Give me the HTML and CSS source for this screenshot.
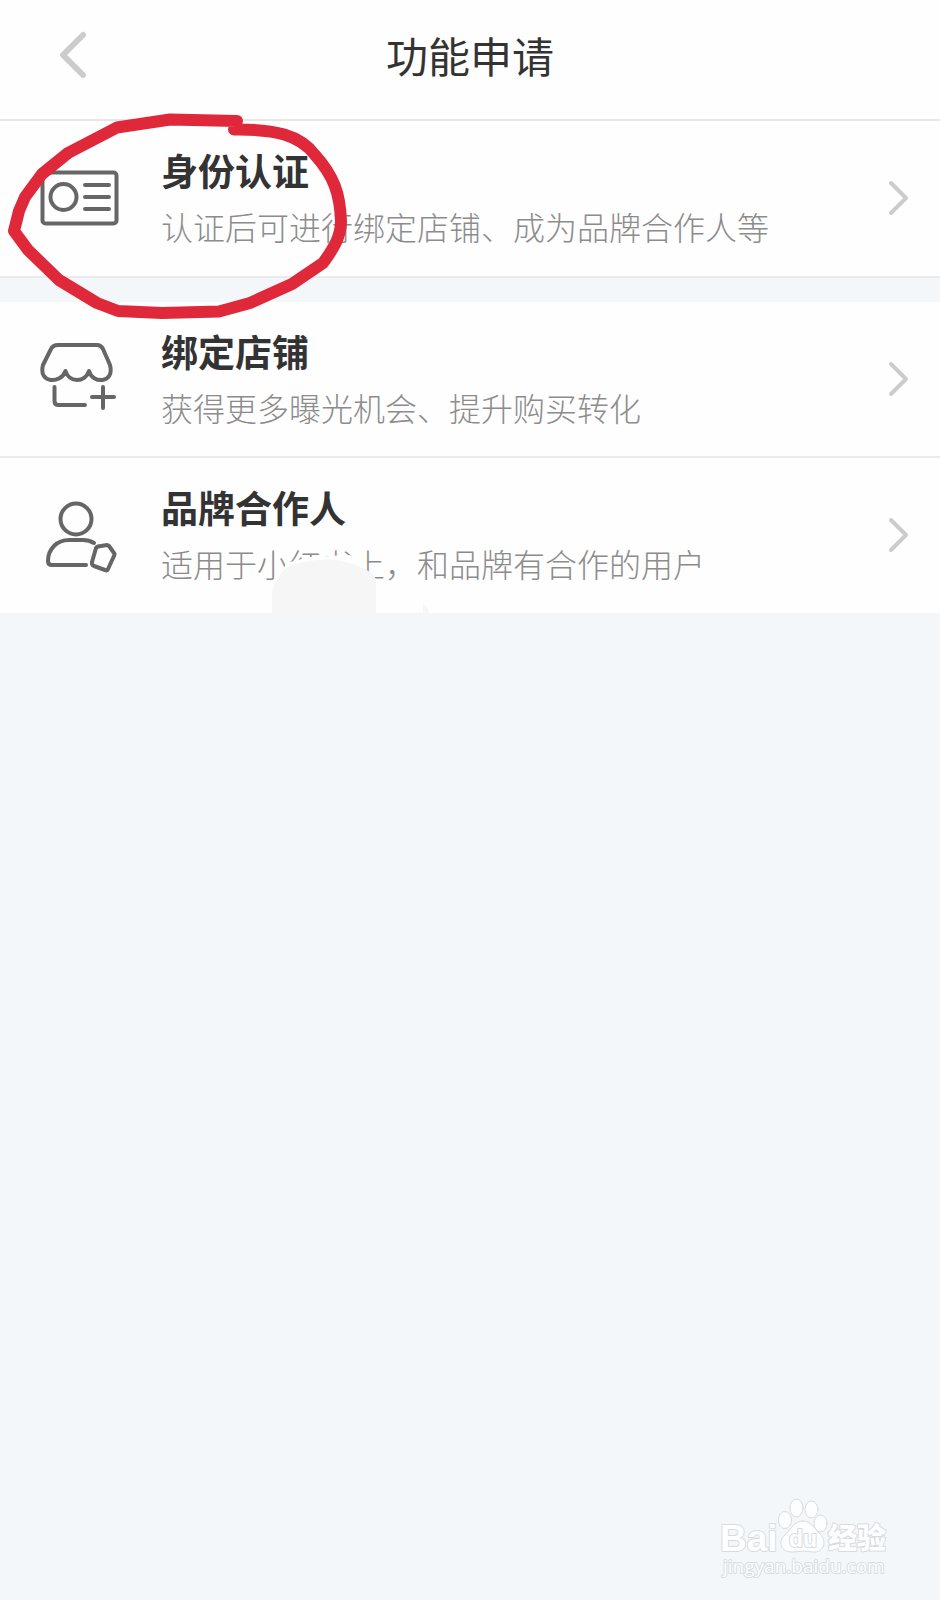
FILE: index.html
```html
<!DOCTYPE html>
<html lang="zh-CN">
<head>
<meta charset="utf-8">
<meta name="viewport" content="width=device-width, initial-scale=1">
<title>功能申请</title>
<link rel="stylesheet" href="styles.css">
</head>
<body>
<div class="page">
  <header class="header">
    <button class="back" type="button" aria-label="返回">
      <svg width="28" height="48" viewBox="0 0 28 48"><path d="M24 4 4 24 24 44"/></svg>
    </button>
    <h1 class="header-title">功能申请</h1>
  </header>
  <main>
    <section class="group">
      <a class="row" href="#identity">
        <svg class="icon" viewBox="0 0 80 80">
          <rect x="2.5" y="14.5" width="74" height="51" rx="3"/>
          <circle cx="23.500" cy="39" r="13"/>
          <path d="M45 27h24M45 39h24M45 51h24"/>
        </svg>
        <span class="text"><strong class="name">身份认证</strong><span class="desc">认证后可进行绑定店铺、成为品牌合作人等</span></span>
        <svg class="chevron" viewBox="0 0 24 36"><path d="M5 3 20 18 5 33"/></svg>
      </a>
    </section>
    <section class="group">
      <a class="row" href="#shop">
        <svg class="icon" viewBox="0 0 80 80">
          <path d="M18 6H57Q61 6 63 10L70 26C75 45 52 45 49 32C45 44 29 44 25.500 32C21 45 -2 45 3 26L11 10Q13 6 18 6Z"/>
          <path d="M14.500 48V62Q14.500 66 18.500 66H45M63 48V69M52 58H74"/>
        </svg>
        <span class="text"><strong class="name">绑定店铺</strong><span class="desc">获得更多曝光机会、提升购买转化</span></span>
        <svg class="chevron" viewBox="0 0 24 36"><path d="M5 3 20 18 5 33"/></svg>
      </a>
      <a class="row" href="#partner">
        <svg class="icon" viewBox="0 0 80 80">
          <circle cx="36" cy="24" r="15.500"/>
          <path d="M54 48Q49 45 43 45H29C17 45 8 54 8 66Q8 70 12 70H46"/>
          <path d="M58 51.500 67 50Q68 50 69 51L74 58Q75 59 74 61L68 74Q67 76 65 75L54 71Q51.500 70 52 67L56 53Q56.500 52 58 51.500Z"/>
        </svg>
        <span class="text"><strong class="name">品牌合作人</strong><span class="desc">适用于小红书上，和品牌有合作的用户</span></span>
        <svg class="chevron" viewBox="0 0 24 36"><path d="M5 3 20 18 5 33"/></svg>
        <svg class="smudge" width="160" height="60" viewBox="0 0 160 60" aria-hidden="true">
          <path fill="#fefefe" d="M4 60V38L16 10 40 4 80 2 84 6V23L104 27 128 34 145 42 156 60Z"/>
          <path fill="#f6f6f6" d="M2 60V40Q6 20 22 12Q62 0 90 14Q102 18 106 26V60Z"/>
          <path fill="#f6f6f6" d="M153 50Q158 54 159 60H153Z"/>
        </svg>
      </a>
    </section>
  </main>
  <svg class="marker" width="350" height="330" viewBox="0 0 350 330" aria-hidden="true">
    <path d="M237 121 170 119.500 117 127.500 68 153 42 174 25 197 19 211 14 231 28 250 59 280 97 303 118 311 162 313 219 311.500 250 303 292 284 323 263C334 248 341 236 341 221C340 194 334 176 315 155C300 135 275 129 234 129.500"/>
  </svg>
  <svg class="watermark" width="172" height="84" viewBox="0 0 172 84" role="img" aria-label="Baidu 经验 jingyan.baidu.com">
    <g class="wm-shape">
      <text class="wm-bai" x="0" y="55">Bai</text>
      <text class="wm-cn" x="108" y="53">经验</text>
      <text class="wm-url" x="3" y="77">jingyan.baidu.com</text>
      <ellipse cx="65" cy="24" rx="6.500" ry="8.500"/>
      <ellipse cx="76.500" cy="12" rx="6.500" ry="9"/>
      <ellipse cx="91.500" cy="13.500" rx="6.500" ry="8.500"/>
      <ellipse cx="100.500" cy="27.500" rx="6.500" ry="8.500"/>
      <path d="M83 25C91 25 94 32 99 37C108 45 104 57 93 56Q83 54 74 56C60 57 57 45 66 38C72 32 74 25 83 25Z"/>
      <text class="wm-du" x="69" y="51">du</text>
    </g>
  </svg>
</div>
</body>
</html>
```
FILE: styles.css
```css
* { box-sizing: border-box; }
body {
  margin: 0;
  background: #f3f7fa;
  color: #333;
  font-family: "Noto Sans CJK SC", sans-serif;
}
.page { position: relative; min-height: 100vh; }
svg { display: block; fill: none; stroke-linecap: round; stroke-linejoin: round; }
.header {
  display: grid;
  grid-template-columns: 100px 1fr 100px;
  align-items: center;
  height: 121px;
  padding-bottom: 10px;
  background: #fefefe;
  border-bottom: 2px solid #e6e6e6;
}
.back {
  justify-self: end;
  margin-right: 13px;
  padding: 0;
  border: 0;
  background: none;
  stroke: #ccc;
  stroke-width: 6;
  cursor: pointer;
}
.header-title {
  margin: 0;
  font-size: 42px;
  font-weight: 400;
  line-height: 60px;
  text-align: center;
}
.group { background: #fefefe; }
.group + .group { margin-top: 24px; }
.row {
  position: relative;
  display: flex;
  align-items: center;
  padding: 21px 30px 21px 40px;
  color: inherit;
  text-decoration: none;
}
.group:first-child .row, .row:not(:last-child) { border-bottom: 2px solid #ebebeb; }
.row:last-child { padding-bottom: 22px; }
.icon { flex: none; width: 80px; height: 80px; margin-right: 41px; stroke: #666; stroke-width: 4; }
.text { flex: 1; display: flex; flex-direction: column; }
.name { font-size: 37px; font-weight: 700; line-height: 56px; }
.desc { font-size: 32px; font-weight: 300; line-height: 56px; color: #8c8c8c; }
.chevron { flex: none; width: 24px; height: 36px; stroke: #ccc; stroke-width: 4; }
.smudge { position: absolute; left: 270px; bottom: 0; }
.marker { position: absolute; left: 0; top: 0; stroke: #df293b; stroke-width: 12; pointer-events: none; }
.watermark { position: absolute; right: 48px; bottom: 20px; }
.wm-shape { fill: #fdfeff; stroke: #d9dcdf; stroke-width: 1; }
.wm-shape text { paint-order: stroke; stroke-width: 2; }
.wm-bai { font: 700 37px "Liberation Sans", sans-serif; }
.wm-cn { font: 900 29px "Noto Sans CJK SC", sans-serif; }
.wm-url { font: 400 19px "Open Sans", sans-serif; }
.wm-du { font: 700 23px "Liberation Sans", sans-serif; }
```
